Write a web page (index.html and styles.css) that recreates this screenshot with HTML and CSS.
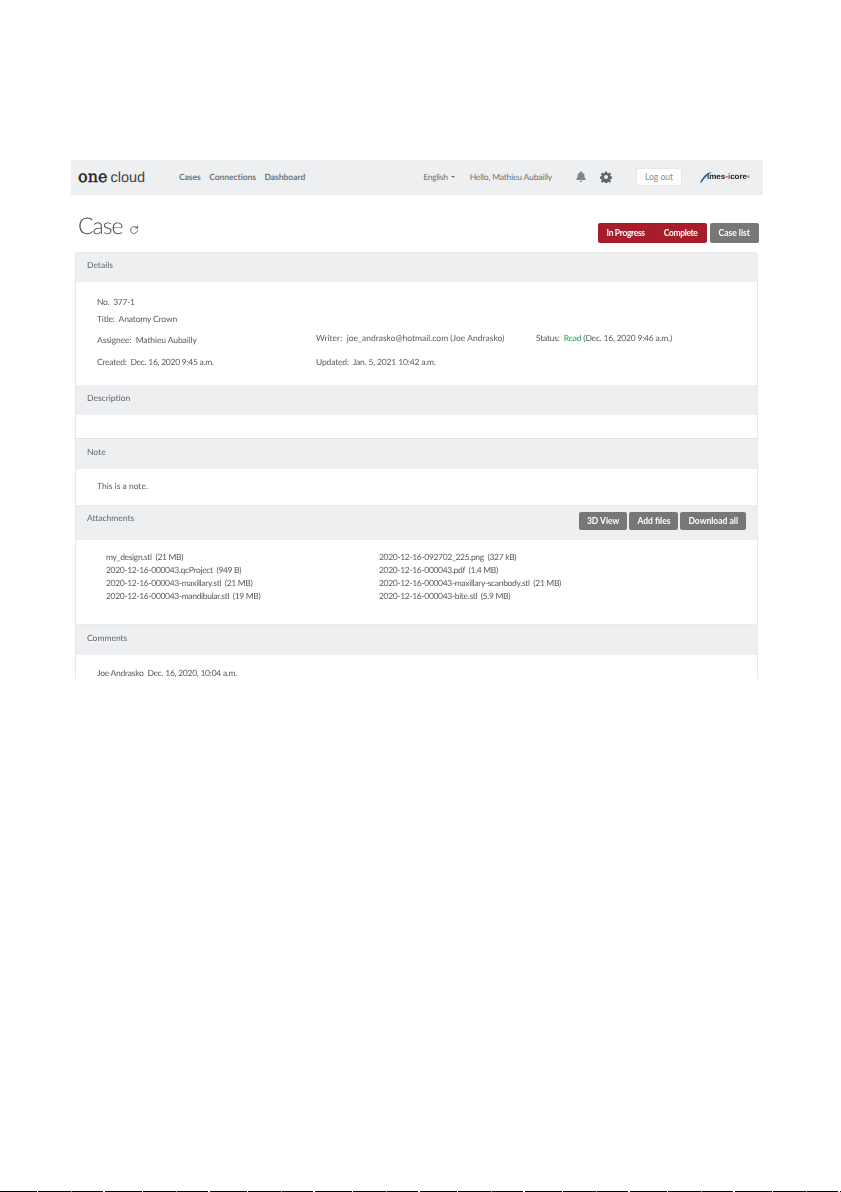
FILE: index.html
```html
<!DOCTYPE html>
<html lang="en">
<head>
<meta charset="utf-8">
<title>Case</title>
<link rel="stylesheet" href="styles.css">
</head>
<body>
<div class="page">
  <div class="shot">
    <nav class="navbar">
      <a class="brand"><span class="brand-one">one</span><span class="brand-cloud">cloud</span></a>
      <div class="nav-links"><a>Cases</a><a>Connections</a><a>Dashboard</a></div>
      <div class="nav-right">
        <span class="lang">English<i class="caret"></i></span>
        <span class="hello">Hello, Mathieu Aubailly</span>
        <svg class="bell" viewBox="0 0 448 512" width="10" height="11"><path fill="#80868b" d="M224 512c35 0 64-29 64-64H160c0 35 29 64 64 64zm216-150c-19-21-56-52-56-154 0-78-54-140-128-155V32a32 32 0 0 0-64 0v21C118 68 64 130 64 208c0 102-37 133-56 154-6 6-8 13-8 22 0 17 13 32 32 32h384c19 0 32-15 32-32 0-9-2-16-8-22z"/></svg>
        <svg class="gear" viewBox="0 0 24 24" width="12" height="12"><path fill="#5f666d" fill-rule="evenodd" d="M10 1h4l.6 3 2.100.9 2.600-1.700 2.800 2.800-1.700 2.600.9 2.100 3 .6v4l-3 .6-.9 2.100 1.700 2.600-2.800 2.800-2.600-1.700-2.100.9-.6 3h-4l-.6-3-2.100-.9-2.600 1.700-2.800-2.800 1.700-2.600-.9-2.100-3-.6v-4l3-.6.9-2.100-1.700-2.600 2.800-2.800 2.600 1.700 2.100-.9zM12 8a4 4 0 1 0 0 8 4 4 0 0 0 0-8z"/></svg>
        <button class="logout">Log out</button>
        <span class="imes"><svg viewBox="0 0 12 12" width="12" height="12"><path d="M0 11.500C3 6 6 2 12 1 8 3.500 5 6.500 1.500 11.500z" fill="#1d5f9e"/></svg><b>imes-<em>i</em>core</b><sup>®</sup></span>
      </div>
    </nav>
    <header class="title-row">
      <h1>Case <svg class="refresh" viewBox="0 0 16 16" width="10" height="10"><path fill="none" stroke="#5d6469" stroke-width="1.500" d="M13.500 8A5.500 5.500 0 1 1 11.500 3.800"/><path fill="#5d6469" d="M9.500 5.500h5v-5z"/></svg></h1>
      <div class="actions">
        <div class="btn-group"><button class="btn red">In Progress</button><button class="btn red">Complete</button></div>
        <button class="btn grey">Case list</button>
      </div>
    </header>
    <main class="card">
      <h2 class="card-head h-details">Details</h2>
      <section class="details">
        <p class="line t-no">No.&nbsp; 377-1</p>
        <p class="line l2 t-title">Title:&nbsp; Anatomy Crown</p>
        <div class="row r3">
          <span class="c1 t-assignee">Assignee:&nbsp; Mathieu Aubailly</span>
          <span class="c2">Writer:&nbsp; joe_andrasko@hotmail.com (Joe Andrasko)</span>
          <span class="c3 t-status">Status:&nbsp; <span class="green">Read</span> (Dec. 16, 2020 9:46 a.m.)</span>
        </div>
        <div class="row r4">
          <span class="c1 t-created">Created:&nbsp; Dec. 16, 2020 9:45 a.m.</span>
          <span class="c2 t-updated">Updated:&nbsp; Jan. 5, 2021 10:42 a.m.</span>
        </div>
      </section>
      <h2 class="card-head h-desc">Description</h2>
      <section class="desc"></section>
      <h2 class="card-head h-note">Note</h2>
      <section class="note">This is a note.</section>
      <div class="card-head h-att">
        <h2>Attachments</h2>
        <div class="att-btns"><button class="btn grey">3D View</button><button class="btn grey">Add files</button><button class="btn grey">Download all</button></div>
      </div>
      <section class="files">
        <ul>
          <li>my_design.stl&nbsp; (21 MB)</li>
          <li>2020-12-16-000043.qcProject&nbsp; (949 B)</li>
          <li>2020-12-16-000043-maxillary.stl&nbsp; (21 MB)</li>
          <li>2020-12-16-000043-mandibular.stl&nbsp; (19 MB)</li>
        </ul>
        <ul>
          <li>2020-12-16-092702_225.png&nbsp; (327 kB)</li>
          <li>2020-12-16-000043.pdf&nbsp; (1.4 MB)</li>
          <li>2020-12-16-000043-maxillary-scanbody.stl&nbsp; (21 MB)</li>
          <li>2020-12-16-000043-bite.stl&nbsp; (5.9 MB)</li>
        </ul>
      </section>
      <h2 class="card-head h-com">Comments</h2>
      <section class="comments">Joe Andrasko&nbsp; Dec. 16, 2020, 10:04 a.m.</section>
    </main>
  </div>
  <div class="edge"></div>
</div>
</body>
</html>
```
FILE: styles.css
```css
* { box-sizing: border-box; }
html, body { margin: 0; padding: 0; background: #fff; }
body { font-family: "Lato", "Noto Sans", sans-serif; font-size: 8.500px; color: #555c63; text-rendering: geometricPrecision; }
.page { height: 1192px; display: flex; flex-direction: column; justify-content: space-between; overflow: hidden; }
.shot { margin: 160px 0 0 71px; width: 692px; height: 522px; overflow: hidden; filter: blur(.3px); }
.navbar { height: 35px; background: #eeeff1; display: flex; align-items: center; padding: 0 0 2px 7px; }
.brand { display: flex; align-items: baseline; width: 101px; }
.brand-one { font-family: "DejaVu Serif", serif; font-size: 16px; color: #222; -webkit-text-stroke: .4px #222; margin-right: 3px; }
.brand-cloud { font-family: "Liberation Sans", sans-serif; font-size: 14.500px; color: #444; }
.nav-links { display: flex; gap: 8.500px; font-weight: 700; letter-spacing: -.05px; color: #70767c; }
.nav-right { margin-left: auto; display: flex; align-items: center; }
.lang { color: #6d7379; letter-spacing: -.3px; margin-right: 15px; }
.caret { display: inline-block; margin-left: 3px; vertical-align: 2px; border: 2.500px solid transparent; border-top-color: #6d7379; border-bottom: 0; }
.hello { color: #6d7379; letter-spacing: -.18px; margin-right: 24px; }
.bell { margin-right: 14px; }
.gear { margin-right: 24px; }
.logout { width: 46px; height: 18px; border: 1px solid #e6e6e6; border-radius: 2px; background: #fff; font: inherit; color: #8a8a8a; padding: 0; margin-right: 18px; }
.imes { display: flex; align-items: center; width: 50px; margin-right: 13px; font-family: "Liberation Sans", sans-serif; font-size: 8px; color: #222; white-space: nowrap; }
.imes svg { margin-right: -5px; }
.imes em { font-style: normal; color: #c0272d; }
.imes sup { font-size: 4px; }
.title-row { display: flex; justify-content: space-between; margin: 0 4px 0 7px; height: 57px; }
h1 { margin: 16px 0 0; font-size: 23px; line-height: 28px; font-weight: 300; letter-spacing: -1px; color: #454c51; }
.refresh { margin-left: 1px; vertical-align: -1px; }
.actions { display: flex; gap: 3px; margin-top: 28px; }
.btn-group { display: flex; }
.btn { height: 20px; border: 0; border-radius: 2px; font: inherit; font-weight: 700; color: #fff; padding: 0 9px; }
.red { background: #a81c2b; border-radius: 0; letter-spacing: -.35px; }
.red:first-child { border-radius: 2px 0 0 2px; }
.red:last-child { border-radius: 0 2px 2px 0; border-left: 1px solid #a01a28; }
.grey { background: #777; }
.card { margin: 0 5px 0 4px; border: 1px solid #e7e8ea; border-bottom: 0; border-radius: 3px 3px 0 0; }
h2 { margin: 0; font: inherit; }
.card-head { background: #eeeff1; padding-left: 11px; color: #60676e; line-height: 12px; font-weight: 400; }
.h-details { height: 29px; padding-top: 6px; border-radius: 2px 2px 0 0; }
.details { height: 103px; padding: 14px 21px 0; }
.line { margin: 0; line-height: 12px; }
.l2 { margin-top: 5px; }
.t-no { letter-spacing: -.27px; }
.t-title { letter-spacing: -.15px; }
.row { display: flex; line-height: 12px; }
.r3 { margin-top: 7px; }
.r4 { margin-top: 10px; }
.c1 { width: 219px; }
.c2 { width: 220px; }
.t-assignee { letter-spacing: -.1px; padding-top: 2px; }
.t-status { letter-spacing: -.21px; }
.t-created { letter-spacing: -.26px; }
.t-updated { letter-spacing: -.16px; }
.green { color: #2e9e62; }
.h-desc { height: 30px; padding-top: 7px; }
.desc { height: 24px; border-bottom: 1px solid #e2e3e5; }
.h-note { height: 30px; padding-top: 7px; }
.note { height: 36px; padding: 11px 21px 0; line-height: 12px; }
.h-att { height: 35px; padding: 6px 11px 0 11px; display: flex; justify-content: space-between; border-top: 1px solid #e9eaec; }
.att-btns { display: flex; gap: 2px; }
.att-btns .btn { height: 18px; padding: 0 8px; }
.files { height: 85px; padding: 11px 0 0 30px; display: flex; border-bottom: 1px solid #e9eaec; letter-spacing: -.33px; }
.files ul { list-style: none; margin: 0; padding: 0; width: 273px; }
.files li { line-height: 13px; white-space: nowrap; }
.h-com { height: 30px; padding-top: 7px; }
.comments { padding: 12px 21px 0; line-height: 12px; letter-spacing: -.26px; }
.edge { height: 1px; background: repeating-linear-gradient(90deg, #000 0 37px, #fff 37px 38px, #000 38px 71px, #999 71px 72px, #000 72px 103px, #fff 103px 105px); }
```
